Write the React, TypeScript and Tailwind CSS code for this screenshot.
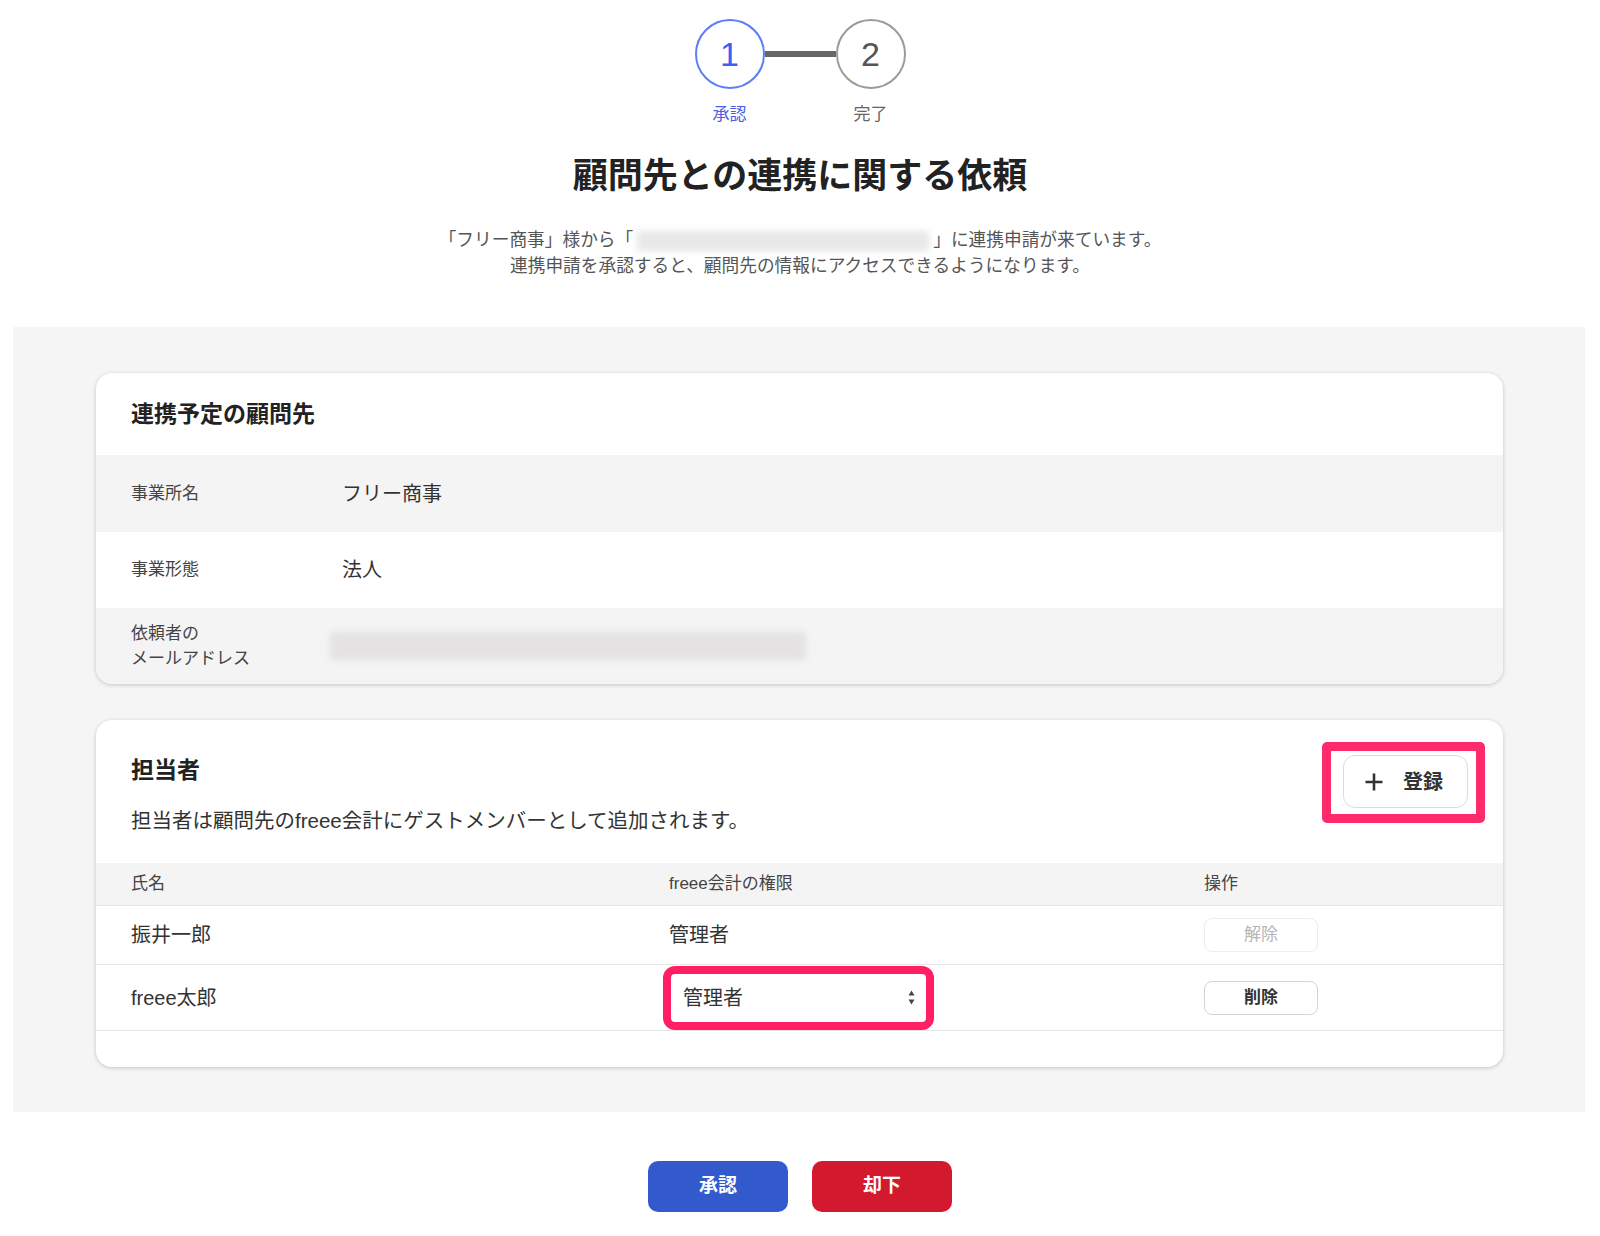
import React from "react";

function PlusIcon() {
  return (
    <svg width="20" height="20" viewBox="0 0 20 20" fill="none">
      <path d="M10 1.5V18.5M1.5 10H18.5" stroke="#333" strokeWidth="2.6" strokeLinecap="butt" />
    </svg>
  );
}

function SelectArrows() {
  return (
    <svg width="7" height="15" viewBox="0 0 7 15">
      <path d="M3.5 0.5L6.5 5.5H0.5Z" fill="#444" />
      <path d="M3.5 14.5L6.5 9.5H0.5Z" fill="#444" />
    </svg>
  );
}

export default function App() {
  return (
    <div className="min-h-[1236px] bg-white font-['Liberation_Sans','Noto_Sans_CJK_JP',sans-serif] text-[#333]">
      {/* Stepper */}
      <div className="flex flex-col items-center pt-[19px]">
        <div className="flex items-center">
          <div className="w-[70px] h-[70px] rounded-full border-2 border-[#5d7cf6] flex items-center justify-center text-[34px] text-[#3e5ef0]">
            1
          </div>
          <div className="w-[71px] h-[6px] bg-[#666]" />
          <div className="w-[70px] h-[70px] rounded-full border-2 border-[#9b9b9b] flex items-center justify-center text-[34px] text-[#555]">
            2
          </div>
        </div>
        <div className="flex gap-[71px] mt-[14px] text-[17px] leading-[24px]">
          <div className="w-[70px] text-center text-[#4d5de6]">承認</div>
          <div className="w-[70px] text-center text-[#666]">完了</div>
        </div>
      </div>

      {/* Title */}
      <h1 className="mt-[24px] text-center text-[35px] leading-[49px] font-bold text-[#222]">
        顧問先との連携に関する依頼
      </h1>

      {/* Subtitle */}
      <div className="mt-[27px] text-center text-[17.7px] leading-[26px] text-[#555]">
        <div>
          「フリー商事」様から「
          <span className="inline-block align-middle w-[292px] h-[20px] mx-[4px] bg-[#e9e7e8] blur-[3px]" />
          」に連携申請が来ています。
        </div>
        <div>連携申請を承認すると、顧問先の情報にアクセスできるようになります。</div>
      </div>

      {/* Gray section */}
      <div className="mt-[48px] ml-[13px] w-[1572px] bg-[#f6f5f5] pt-[46px] pb-[45px] pl-[83px]">
        {/* Card 1 */}
        <div className="w-[1407px] bg-white rounded-[16px] shadow-[0_1px_4px_rgba(0,0,0,0.2)] overflow-hidden">
          <div className="h-[82px] pl-[35px] flex items-center text-[23px] font-bold text-[#222]">
            連携予定の顧問先
          </div>
          <div className="h-[77px] bg-[#f5f4f5] pl-[35px] grid grid-cols-[211px_1fr] items-center">
            <div className="text-[17px] text-[#444]">事業所名</div>
            <div className="text-[20px] text-[#333]">フリー商事</div>
          </div>
          <div className="h-[76px] pl-[35px] grid grid-cols-[211px_1fr] items-center">
            <div className="text-[17px] text-[#444]">事業形態</div>
            <div className="text-[20px] text-[#333]">法人</div>
          </div>
          <div className="h-[76px] bg-[#f5f4f5] pl-[35px] grid grid-cols-[211px_1fr] items-center">
            <div className="text-[17px] leading-[25px] text-[#444]">
              <div>依頼者の</div>
              <div>メールアドレス</div>
            </div>
            <div>
              <div className="-ml-[12px] w-[476px] h-[28px] bg-[#e4e2e3] blur-[3px]" />
            </div>
          </div>
        </div>

        {/* Card 2 */}
        <div className="mt-[36px] w-[1407px] bg-white rounded-[16px] shadow-[0_1px_4px_rgba(0,0,0,0.2)] overflow-hidden">
          <div className="h-[143px] pl-[35px] pr-[18px] pt-[22px] flex justify-between items-start">
            <div className="pt-[12px]">
              <div className="text-[23px] leading-[32px] font-bold text-[#222]">担当者</div>
              <div className="mt-[21px] text-[20.5px] leading-[28px] text-[#333]">
                担当者は顧問先のfreee会計にゲストメンバーとして追加されます。
              </div>
            </div>
            <div className="w-[163px] h-[81px] border-[9px] border-[#ff2a6b] rounded-[5px] bg-white pl-[12px] pt-[4px]">
              <button className="w-[125px] h-[53px] border border-[#dcdcdc] rounded-[12px] bg-white flex items-center pl-[20px] gap-[19px]">
                <PlusIcon />
                <span className="text-[20px] font-bold text-[#333]">登録</span>
              </button>
            </div>
          </div>

          <div className="h-[43px] bg-[#f5f4f5] border-b border-[#e6e6e6] px-[35px] grid grid-cols-[538px_535px_1fr] items-center text-[17px] text-[#444]">
            <div>氏名</div>
            <div>freee会計の権限</div>
            <div>操作</div>
          </div>

          <div className="h-[59px] border-b border-[#e6e6e6] px-[35px] grid grid-cols-[538px_535px_1fr] items-center text-[20px] text-[#333]">
            <div>振井一郎</div>
            <div>管理者</div>
            <div>
              <button className="w-[114px] h-[34px] border border-[#ececec] rounded-[8px] bg-white text-[17px] text-[#b5b5b5]">
                解除
              </button>
            </div>
          </div>

          <div className="h-[66px] border-b border-[#e6e6e6] px-[35px] grid grid-cols-[538px_535px_1fr] items-center text-[20px] text-[#333]">
            <div>freee太郎</div>
            <div>
              <div className="-ml-[6px] w-[271px] h-[64px] border-[8px] border-[#ff1f62] rounded-[12px] bg-white flex items-center justify-between pl-[12px] pr-[11px]">
                <span className="text-[20px] text-[#333]">管理者</span>
                <SelectArrows />
              </div>
            </div>
            <div>
              <button className="w-[114px] h-[34px] border border-[#d4d4d4] rounded-[8px] bg-white text-[17px] font-bold text-[#333]">
                削除
              </button>
            </div>
          </div>

          <div className="h-[36px]" />
        </div>
      </div>

      {/* Bottom buttons */}
      <div className="mt-[49px] flex justify-center gap-[24px] pb-[24px]">
        <button className="w-[140px] h-[51px] rounded-[10px] bg-[#325acc] text-white text-[19px] font-bold">
          承認
        </button>
        <button className="w-[140px] h-[51px] rounded-[10px] bg-[#d2192e] text-white text-[19px] font-bold">
          却下
        </button>
      </div>
    </div>
  );
}
